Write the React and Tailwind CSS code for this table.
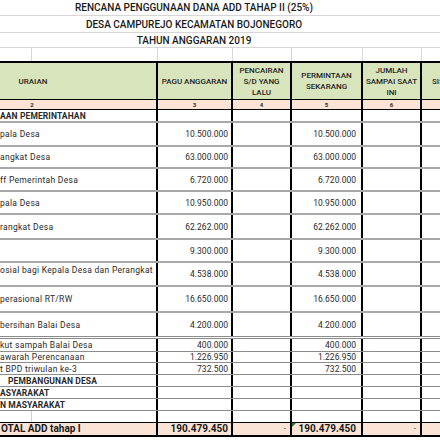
import React from "react";

const rows = [
  { h: "h-[13px]", label: "AAN PEMERINTAHAN", bold: true, line: "border-b-2 border-[#a8a8a8]" },
  { h: "h-[24px]", label: "pala Desa", pagu: "10.500.000", minta: "10.500.000" },
  { h: "h-[22px]", label: "angkat Desa", pagu: "63.000.000", minta: "63.000.000" },
  { h: "h-[23px]", label: "ff Pemerintah Desa", pagu: "6.720.000", minta: "6.720.000" },
  { h: "h-[23px]", label: "pala Desa", pagu: "10.950.000", minta: "10.950.000" },
  { h: "h-[25px]", label: "rangkat Desa", pagu: "62.262.000", minta: "62.262.000" },
  { h: "h-[23px]", label: "", pagu: "9.300.000", minta: "9.300.000" },
  { h: "h-[24px]", label: "osial bagi Kepala Desa dan Perangkat", pagu: "4.538.000", minta: "4.538.000", wrap: true },
  { h: "h-[26px]", label: "perasional RT/RW", pagu: "16.650.000", minta: "16.650.000" },
  { h: "h-[26px]", label: "bersihan Balai Desa", pagu: "4.200.000", minta: "4.200.000", line: "border-b-[3px] border-double border-[#8c8c8c]" },
  { h: "h-[13px]", label: "kut sampah Balai Desa", pagu: "400.000", minta: "400.000", line: "border-b border-[#8c8c8c]" },
  { h: "h-[11px]", label: "awarah Perencanaan", pagu: "1.226.950", minta: "1.226.950", line: "border-b border-[#8c8c8c]" },
  { h: "h-[12px]", label: "t BPD triwulan ke-3", pagu: "732.500", minta: "732.500", line: "border-b border-[#8c8c8c]" },
  { h: "h-[12px]", label: "PEMBANGUNAN DESA", bold: true, indent: true, line: "border-b border-[#8c8c8c]" },
  { h: "h-[12px]", label: "ASYARAKAT", bold: true, line: "border-b border-[#8c8c8c]" },
  { h: "h-[12px]", label: "N MASYARAKAT", bold: true, line: "border-b border-[#8c8c8c]" },
];

function BodyRow({ r }) {
  const line = r.line || "border-b-2 border-[#a8a8a8]";
  return (
    <div className={`flex ${r.h} ${line} text-[8.5px] leading-[10px]`}>
      <div
        className={`w-[158px] shrink-0 border-r-2 border-black flex whitespace-nowrap overflow-hidden ${
          r.wrap ? "items-start pt-[2px]" : "items-center"
        } ${r.bold ? "font-bold tracking-[0.1px]" : "tracking-[0.3px]"} ${r.indent ? "pl-[8px]" : ""}`}
      >
        {r.label}
      </div>
      <div className="w-[75px] shrink-0 border-r-2 border-black flex items-center justify-end pr-[3px]">
        {r.pagu}
      </div>
      <div className="w-[59px] shrink-0 border-r-2 border-black"></div>
      <div className="w-[71px] shrink-0 border-r-2 border-black flex items-center justify-end pr-[5px]">
        {r.minta}
      </div>
      <div className="w-[59px] shrink-0 border-r-2 border-black"></div>
      <div className="w-[60px] shrink-0"></div>
    </div>
  );
}

export default function App() {
  return (
    <div className="w-[440px] h-[440px] overflow-hidden bg-white font-['Roboto',sans-serif] text-[#2a2a2a]">
      <div className="h-[16px] border-b border-[#d6d6d6] flex items-center">
        <p className="w-[388px] text-center text-[10px] font-medium text-[#1a1a1a]">
          RENCANA PENGGUNAAN DANA ADD TAHAP II (25%)
        </p>
      </div>
      <div className="h-[17px] border-b border-[#d6d6d6] flex items-center">
        <p className="w-[388px] text-center text-[10px] font-medium text-[#1a1a1a]">
          DESA CAMPUREJO KECAMATAN BOJONEGORO
        </p>
      </div>
      <div className="h-[15px] border-b border-[#d6d6d6] flex items-center">
        <p className="w-[388px] text-center text-[10px] font-medium text-[#1a1a1a]">
          TAHUN ANGGARAN 2019
        </p>
      </div>

      <div className="flex h-[15px] border-b-2 border-black">
        <div className="w-[32px] shrink-0 border-r border-[#d6d6d6]"></div>
        <div className="w-[126px] shrink-0 border-r border-[#d6d6d6]"></div>
        <div className="w-[75px] shrink-0 border-r border-[#d6d6d6]"></div>
        <div className="w-[59px] shrink-0 border-r border-[#d6d6d6]"></div>
        <div className="w-[71px] shrink-0 border-r border-[#d6d6d6]"></div>
        <div className="w-[59px] shrink-0 border-r border-[#d6d6d6]"></div>
      </div>

      <div className="flex h-[37px] border-b border-black bg-[#d8e4bc] text-[8px] font-medium leading-[11px] text-center text-[#1f1f1f]">
        <div className="w-[158px] shrink-0 border-r-2 border-black flex items-center">
          <span className="w-[66px]">URAIAN</span>
        </div>
        <div className="w-[75px] shrink-0 border-r-2 border-black flex items-center justify-center">
          PAGU ANGGARAN
        </div>
        <div className="w-[59px] shrink-0 border-r-2 border-black flex items-center justify-center">
          PENCAIRAN
          <br />
          S/D YANG
          <br />
          LALU
        </div>
        <div className="w-[71px] shrink-0 border-r-2 border-black flex items-center justify-center">
          PERMINTAAN
          <br />
          SEKARANG
        </div>
        <div className="w-[59px] shrink-0 border-r-2 border-black flex items-center justify-center">
          JUMLAH
          <br />
          SAMPAI SAAT
          <br />
          INI
        </div>
        <div className="w-[60px] shrink-0 flex items-center pl-[10px]">SISA</div>
      </div>

      <div className="flex h-[10px] border-b border-black bg-[#fbe4d6] text-[6px] font-bold leading-[9px] text-center">
        <div className="w-[158px] shrink-0 border-r-2 border-black">
          <div className="w-[64px]">2</div>
        </div>
        <div className="w-[75px] shrink-0 border-r-2 border-black">3</div>
        <div className="w-[59px] shrink-0 border-r-2 border-black">4</div>
        <div className="w-[71px] shrink-0 border-r-2 border-black">5</div>
        <div className="w-[59px] shrink-0 border-r-2 border-black">6</div>
        <div className="w-[60px] shrink-0"></div>
      </div>

      {rows.map((r, i) => (
        <BodyRow key={i} r={r} />
      ))}

      <div className="flex h-[12px] border-b border-black">
        <div className="w-[32px] shrink-0 border-r border-[#d0d0d0]"></div>
        <div className="w-[126px] shrink-0 border-r-2 border-black"></div>
        <div className="w-[75px] shrink-0 border-r-2 border-black"></div>
        <div className="w-[59px] shrink-0 border-r-2 border-black"></div>
        <div className="w-[71px] shrink-0 border-r-2 border-black"></div>
        <div className="w-[59px] shrink-0 border-r-2 border-black"></div>
      </div>

      <div className="flex h-[14px] border-b-2 border-black bg-[#fbe4d6] text-[10px] font-bold leading-[12px] text-[#1a1a1a]">
        <div className="w-[158px] shrink-0 border-r-2 border-black flex items-center whitespace-nowrap pl-[1px]">
          OTAL ADD tahap I
        </div>
        <div className="w-[75px] shrink-0 border-r-2 border-black flex items-center justify-end pr-[3px]">
          190.479.450
        </div>
        <div className="w-[59px] shrink-0 border-r-2 border-black flex items-center justify-end pr-[4px] font-normal text-[8px]">
          -
        </div>
        <div className="relative w-[71px] shrink-0 border-r-2 border-black flex items-center justify-end pr-[5px]">
          <span className="absolute left-0 top-0 w-0 h-0 border-t-[4px] border-r-[4px] border-t-[#1e7b34] border-r-transparent"></span>
          190.479.450
        </div>
        <div className="w-[59px] shrink-0 border-r-2 border-black flex items-center justify-end pr-[4px] font-normal text-[8px]">
          -
        </div>
        <div className="w-[60px] shrink-0"></div>
      </div>
    </div>
  );
}
